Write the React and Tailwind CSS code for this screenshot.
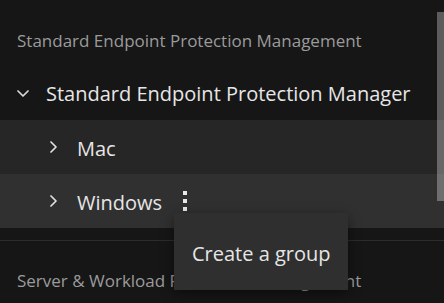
import { useState } from 'react'

const groups = ['Mac', 'Windows']

function ChevronDown() {
  return (
    <svg width="12" height="7" viewBox="0 0 12 7" fill="none" className="shrink-0">
      <path d="M1 1l5 5 5-5" stroke="#d8d8d8" strokeWidth="1.7" strokeLinecap="round" strokeLinejoin="round" />
    </svg>
  )
}

function ChevronRight() {
  return (
    <svg width="7" height="12" viewBox="0 0 7 12" fill="none" className="shrink-0">
      <path d="M1 1l5 5-5 5" stroke="#e0e0e0" strokeWidth="1.7" strokeLinecap="round" strokeLinejoin="round" />
    </svg>
  )
}

export default function App() {
  const [menuOpen] = useState(true)

  return (
    <div
      className="relative w-[444px] h-[303px] overflow-hidden bg-[#161616]"
      style={{ fontFamily: '"Segoe UI", "Open Sans", "Noto Sans", sans-serif' }}
    >
      {/* sección superior */}
      <div className="h-[66px] pt-[30px] pl-[17px] text-[17px] leading-[22px] text-[#9b9b9b] whitespace-nowrap">
        Standard Endpoint Protection Management
      </div>

      <div className="h-[54px] flex items-center pl-[17px] gap-[17px] text-[20px] text-[#e6e6e6] whitespace-nowrap">
        <ChevronDown />
        <span className="translate-y-[1px]">Standard Endpoint Protection Manager</span>
      </div>

      {groups.map((g, i) => (
        <div
          key={g}
          className={`h-[54px] flex items-center pl-[50px] text-[20px] text-[#e6e6e6] whitespace-nowrap ${i === 0 ? 'bg-[#262626]' : 'bg-[#303030]'}`}
        >
          <ChevronRight />
          <span className="ml-[20px] translate-y-[2px]">{g}</span>
          {g === 'Windows' && (
            <div className="ml-[21px] flex flex-col gap-[4px]">
              <span className="block w-[4px] h-[4px] bg-[#e8e8e8]" />
              <span className="block w-[4px] h-[4px] bg-[#e8e8e8]" />
              <span className="block w-[4px] h-[4px] bg-[#e8e8e8]" />
            </div>
          )}
        </div>
      ))}

      {/* segunda sección */}
      <div className="mt-[12px] border-t border-[#2c2c2c] pt-[29px] pl-[17px] text-[17px] leading-[22px] text-[#9b9b9b] whitespace-nowrap">
        Server &amp; Workload Protection Management
      </div>

      {/* scrollbar */}
      <div className="absolute right-0 top-[12px] w-[7px] h-[189px] bg-white/30" />

      {menuOpen && (
        <div className="absolute left-[174px] top-[213px] w-[174px] h-[77px] flex items-center px-[18px] bg-[#2f2f2f] text-[20px] text-[#e6e6e6] shadow-[0_4px_12px_rgba(0,0,0,0.45)] whitespace-nowrap">
          <span className="translate-y-[2px]">Create a group</span>
        </div>
      )}
    </div>
  )
}
